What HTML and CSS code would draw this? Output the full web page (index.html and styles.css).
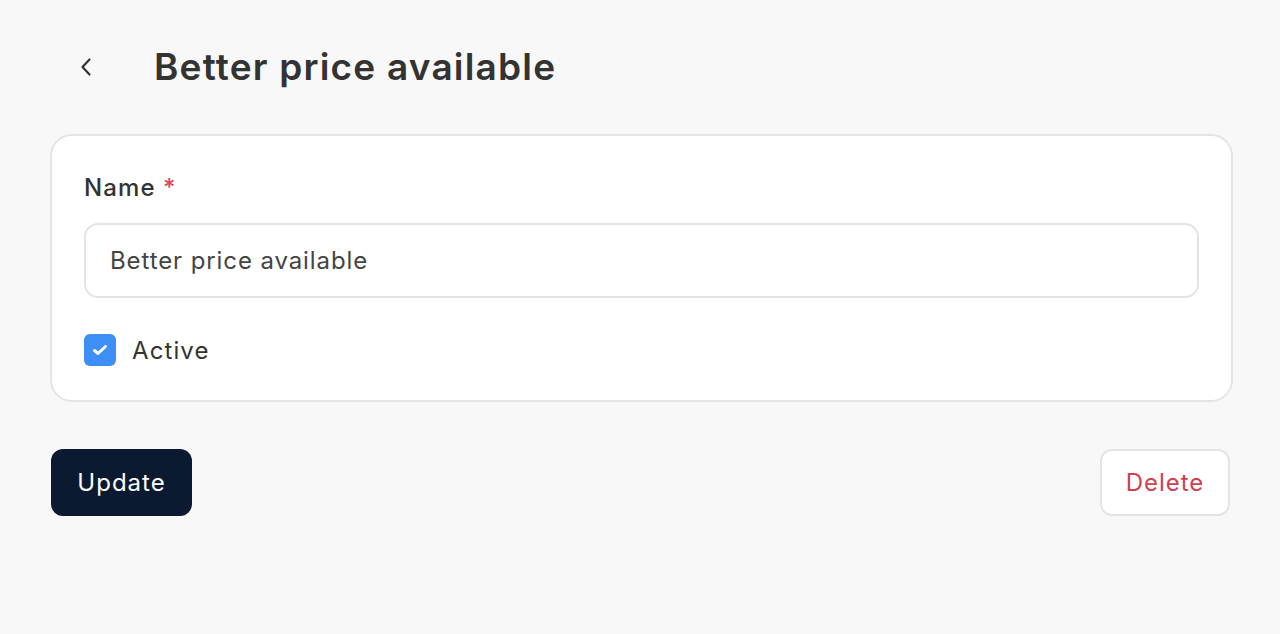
FILE: index.html
```html
<!DOCTYPE html>
<html>
<head>
<meta charset="utf-8">
<link rel="stylesheet" href="styles.css">
</head>
<body>
<main class="page">
  <header class="header">
    <button class="back" aria-label="Back">
      <svg width="16" height="22" viewBox="0 0 16 22"><path d="M11.5 3.5 L4.5 11 L11.5 18.5" fill="none" stroke="#333" stroke-width="2.2" stroke-linecap="round" stroke-linejoin="round"/></svg>
    </button>
    <h1 class="title">Better price available</h1>
  </header>
  <section class="card">
    <label class="label">Name <span class="req">*</span></label>
    <div class="input">Better price available</div>
    <div class="check-row">
      <span class="checkbox">
        <svg width="18" height="14" viewBox="0 0 18 14"><path d="M3.5 7.5 L7 10.5 L14.5 3.5" fill="none" stroke="#fff" stroke-width="3" stroke-linecap="round" stroke-linejoin="round"/></svg>
      </span>
      <span class="check-label">Active</span>
    </div>
  </section>
  <div class="actions">
    <button class="btn btn-primary">Update</button>
    <button class="btn btn-danger">Delete</button>
  </div>
</main>
</body>
</html>
```
FILE: styles.css
```css
* { box-sizing: border-box; }
html, body { margin: 0; padding: 0; }
body {
  background: #f8f8f8;
  font-family: Inter, "Noto Sans", sans-serif;
  color: #333;
}
.page {
  padding: 0 48px 0 50px;
}
.header {
  display: flex;
  align-items: center;
  height: 134px;
}
.back {
  background: none;
  border: none;
  padding: 0;
  margin-left: 28px;
  width: 16px;
  height: 22px;
  display: flex;
  cursor: pointer;
}
.title {
  margin: 0 0 0 60px;
  font-size: 37px;
  font-weight: 600;
  color: #333;
  letter-spacing: 1.2px;
  position: relative;
  top: -1px;
}
.card {
  background: #fff;
  border: 2px solid #e4e4e4;
  border-radius: 22px;
  padding: 36px 32px 34px 32px;
  width: 1183px;
}
.label {
  display: block;
  font-size: 24px;
  font-weight: 500;
  color: #333;
  line-height: 32px;
  letter-spacing: 1.1px;
}
.req { color: #d9485f; }
.input {
  margin-top: 19px;
  height: 75px;
  border: 2px solid #e4e4e4;
  border-radius: 14px;
  padding: 0 24px;
  display: flex;
  align-items: center;
  font-size: 24px;
  color: #444;
  letter-spacing: 0.9px;
}
.check-row {
  display: flex;
  align-items: center;
  margin-top: 36px;
  gap: 16px;
}
.checkbox {
  width: 32px;
  height: 32px;
  border-radius: 6px;
  background: #3d8ff6;
  display: flex;
  align-items: center;
  justify-content: center;
}
.check-label {
  font-size: 24px;
  color: #333;
  letter-spacing: 1.1px;
}
.actions {
  display: flex;
  justify-content: space-between;
  margin-top: 47px;
  width: 1180px;
}
.btn {
  font-family: Inter, "Noto Sans", sans-serif;
  font-size: 24px;
  height: 67px;
  border-radius: 12px;
  padding: 0;
  letter-spacing: 1px;
  cursor: pointer;
}
.btn-primary {
  background: #0b1a31;
  color: #fff;
  border: none;
  margin-left: 1px;
  width: 141px;
}
.btn-danger {
  background: #fff;
  color: #d0404f;
  border: 2px solid #e4e4e4;
  width: 130px;
}
```
